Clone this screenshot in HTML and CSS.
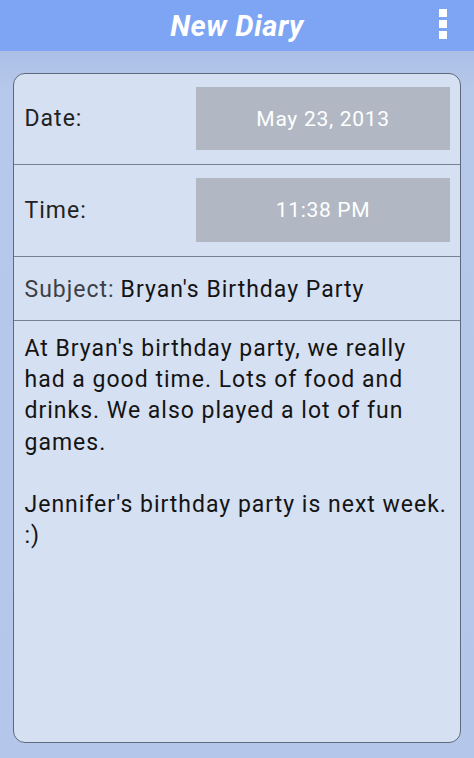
FILE: index.html
```html
<!DOCTYPE html>
<html lang="en">
<head>
    <meta charset="UTF-8">
    <meta name="viewport" content="width=device-width, initial-scale=1.0">
    <title>New Diary</title>
    <link rel="stylesheet" href="styles.css">
</head>
<body>
    <div class="action-bar">
        <h1 class="title">New Diary</h1>
        <div class="overflow-menu">
            <span></span>
            <span></span>
            <span></span>
        </div>
    </div>

    <div class="content">
        <div class="diary-card">
            <div class="row picker-row date-row">
                <span class="label">Date:</span>
                <div class="picker">May 23, 2013</div>
            </div>
            <div class="row picker-row time-row">
                <span class="label">Time:</span>
                <div class="picker">11:38 PM</div>
            </div>
            <div class="row subject-row">
                <span class="subject-label">Subject:</span> Bryan's Birthday Party
            </div>
            <div class="diary-body">
                <p>At Bryan's birthday party, we really had a good time. Lots of food and drinks. We also played a lot of fun games.</p>
                <p>Jennifer's birthday party is next week. :)</p>
            </div>
        </div>
    </div>
</body>
</html>
```

FILE: styles.css
```css
html, body {
    margin: 0;
    height: 100%;
    overflow: hidden;
}
body {
    font-family: Roboto, "Noto Sans", sans-serif;
    background: #b4c7ea;
    display: flex;
    flex-direction: column;
}
.action-bar {
    height: 51px;
    background: #7da5f4;
    display: flex;
    align-items: center;
    justify-content: center;
    position: relative;
}
.title {
    margin: 0;
    color: #fff;
    font-size: 29px;
    font-weight: bold;
    font-style: italic;
    letter-spacing: 0.6px;
}
.overflow-menu {
    position: absolute; /* 疊在標題列右側 */
    right: 27px;
    top: 9px;
    display: flex;
    flex-direction: column;
    gap: 3px;
}
.overflow-menu span {
    width: 8px;
    height: 8px;
    background: #fff;
}
.content {
    flex: 1;
    padding: 22px 13px 15px 13px;
    background: linear-gradient(to bottom, #abbfe7 0px, #b7c9ea 40px, #b4c7ea 100%);
    display: flex;
}
.diary-card {
    flex: 1;
    background: #d5e0f2;
    border: 1.5px solid #5e697b;
    border-radius: 12px;
    display: flex;
    flex-direction: column;
    color: #141414;
    letter-spacing: 1px;
}
.row {
    border-bottom: 1.5px solid #77818f;
}
.picker-row {
    display: flex;
    align-items: center;
    padding: 13px 10px 14px 10.5px;
}
.label {
    flex: 1;
    font-size: 23px;
    color: #222;
}
.picker {
    width: 254px;
    height: 63px;
    background: #b1b8c3;
    color: #fff;
    font-size: 21px;
    letter-spacing: 0.7px;
    display: flex;
    align-items: center;
    justify-content: center;
}
.time-row .picker {
    height: 64px;
}
.subject-row {
    height: 64px;
    box-sizing: border-box;
    padding: 2px 10px 0 10.5px;
    display: flex;
    align-items: center;
    font-size: 23px;
    gap: 6px;
}
.subject-label {
    color: #3d3f44;
}
.diary-body {
    padding: 12px 9px 15px 10.5px;
    font-size: 23px;
    line-height: 31.2px;
}
.diary-body p {
    margin: 0 0 31.2px 0;
}
```
